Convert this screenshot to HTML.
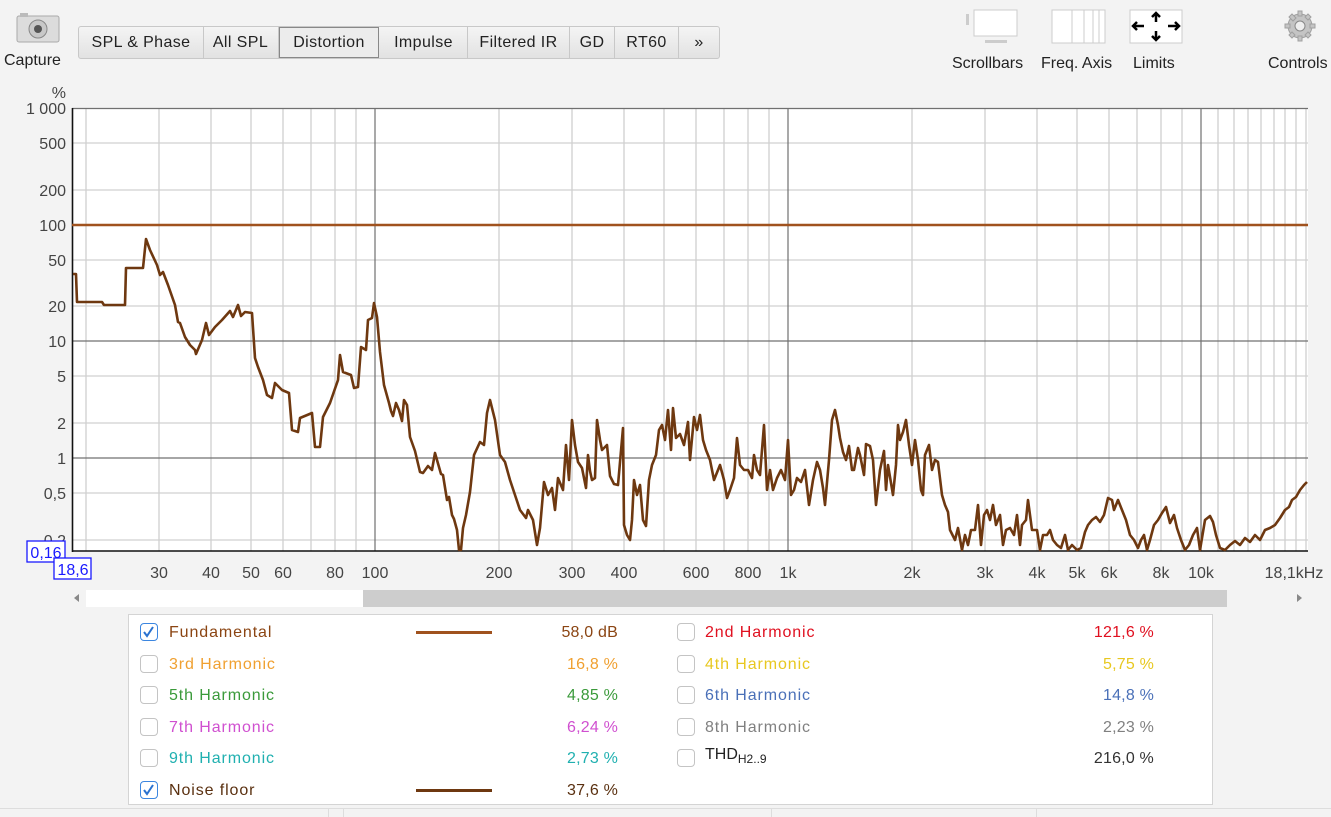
<!DOCTYPE html>
<html><head><meta charset="utf-8"><style>
body{margin:0;width:1331px;height:817px;background:#f3f3f3;font-family:"Liberation Sans",sans-serif;position:relative;overflow:hidden}
.a{position:absolute}
.tabs{left:78px;top:26px;width:642px;height:33px;background:linear-gradient(#f4f4f4,#e2e2e2);border:1px solid #c8c8c8;border-radius:3px;box-sizing:border-box}
.tab{position:absolute;top:0;height:31px;line-height:31px;font-size:16px;color:#222;text-align:center;border-right:1px solid #c8c8c8;letter-spacing:0.4px}
.tl{font-size:16px;color:#222;text-align:center}
.lg{font-size:16px;line-height:20px;letter-spacing:0.9px}
.cb{position:absolute;width:18px;height:18px;border:1.5px solid #c4c4c4;border-radius:4px;background:#fff;box-sizing:border-box}
.cb.on{border-color:#3c86e0}
</style></head><body>
<svg class="a" style="left:15px;top:12px" width="48" height="32"><rect x="2" y="4" width="42" height="26" rx="2" fill="#dcdcdc" stroke="#aaa"/><rect x="5" y="1" width="8" height="4" fill="#bbb"/><circle cx="23" cy="17" r="9" fill="#c8c8c8" stroke="#888"/><circle cx="23" cy="17" r="4" fill="#555"/></svg>
<div class="a tl" style="left:4px;top:52px">Capture</div>
<div class="a tabs">
<div class="tab" style="left:0;width:124px">SPL &amp; Phase</div>
<div class="tab" style="left:124px;width:75px">All SPL</div>
<div class="tab" style="left:200px;width:100px;background:#ececec;border:1px solid #888;height:31px;box-sizing:border-box;line-height:29px">Distortion</div>
<div class="tab" style="left:301px;width:87px">Impulse</div>
<div class="tab" style="left:389px;width:101px">Filtered IR</div>
<div class="tab" style="left:491px;width:44px">GD</div>
<div class="tab" style="left:536px;width:63px">RT60</div>
<div class="tab" style="left:600px;width:40px;border:none">&#187;</div>
</div>
<svg class="a" style="left:965px;top:9px" width="56" height="35"><rect x="1" y="5" width="3" height="11" fill="#ccc"/><rect x="9" y="1" width="43" height="26" fill="#fff" stroke="#ccc"/><rect x="20" y="31" width="22" height="3" fill="#ccc"/></svg>
<div class="a tl" style="left:952px;top:55px">Scrollbars</div>
<svg class="a" style="left:1051px;top:9px" width="56" height="36"><rect x="1" y="1" width="53" height="33" fill="#fff" stroke="#ccc"/><path d="M21 1v33M33 1v33M42 1v33M48 1v33" stroke="#ccc"/></svg>
<div class="a tl" style="left:1041px;top:55px">Freq. Axis</div>
<svg class="a" style="left:1129px;top:9px" width="56" height="36"><rect x="1" y="1" width="52" height="33" fill="#fff" stroke="#ccc"/><g stroke="#000" stroke-width="2.5" fill="none"><path d="M5 17h10M8 13l-4 4 4 4M39 17h11M46 13l4 4-4 4M27 5v8M23 8l4-4 4 4M27 22v9M23 27l4 4 4-4"/></g></svg>
<div class="a tl" style="left:1133px;top:55px">Limits</div>
<svg class="a" style="left:1283px;top:9px" width="34" height="34"><g fill="#c4c4c4" stroke="#a0a0a0"><circle cx="17" cy="17" r="12"/><path d="M15 2h4v5h-4zM15 27h4v5h-4zM2 15h5v4H2zM27 15h5v4h-5z"/><path d="M6 8l3-3 4 4-3 3zM25 29l-3-3 3-3 3 3zM25 5l3 3-3 3-3-3zM6 26l3-3 3 3-3 3z"/></g><circle cx="17" cy="17" r="5" fill="#eee" stroke="#888"/></svg>
<div class="a tl" style="left:1268px;top:55px">Controls</div>

<svg class="a" style="left:0;top:80px" width="1331" height="530" font-family="Liberation Sans" font-size="16" fill="#444">
<g transform="translate(0,-80)">
<rect x="72" y="108" width="1236" height="443" fill="#fff"/>
<g stroke="#d0d0d0" stroke-width="1.3">
<path d="M86 108V551M159 108V551M211 108V551M251 108V551M283 108V551M311 108V551M335 108V551M356 108V551M499 108V551M572 108V551M624 108V551M664 108V551M696 108V551M724 108V551M748 108V551M769 108V551M912 108V551M985 108V551M1037 108V551M1077 108V551M1109 108V551M1137 108V551M1161 108V551M1182 108V551M1218 108V551M1234 108V551M1248 108V551M1261 108V551M1274 108V551M1285 108V551M1296 108V551M1306 108V551"/>
<path d="M72 143H1308M72 190H1308M72 260H1308M72 306H1308M72 376H1308M72 423H1308M72 493H1308M72 540H1308"/>
</g>
<g stroke="#707070" stroke-width="1.2"><path d="M375 108V551M788 108V551M1201 108V551M72 341H1308M72 458H1308M72 108.5H1308"/></g>
<path d="M72.5 108V552M72 551H1308" stroke="#111" stroke-width="1.6"/>
<path d="M72 225H1308" stroke="#a0521e" stroke-width="2.5"/>
<polyline fill="none" stroke="#6e3810" stroke-width="2.6" stroke-linejoin="round" points="73,274 76,274 77,302 102,302 104,305 125,305 126,268 143,268 146,239 150,250 157,265 160,275 163,272 168,285 175,305 178,322 180,323 185,337 190,345 195,350 196,354 202,340 206,323 209,335 215,327 222,320 230,311 233,317 238,305 241,316 245,312 252,313 255,358 258,367 263,380 267,395 272,398 275,383 282,390 289,393 292,430 298,432 300,418 312,413 315,447 320,447 323,417 330,403 338,380 340,355 343,372 351,375 354,388 358,387 361,347 366,350 368,320 372,318 374,303 377,317 380,352 384,385 389,403 391,411 393,416 396,403 399,410 402,421 404,400 407,405 410,437 415,451 420,472 423,473 428,466 432,470 435,453 441,474 443,475 447,500 449,497 452,515 454,519 457,530 459,550 461,550 463,528 466,515 470,492 474,455 480,442 484,445 487,413 490,400 495,420 500,455 505,462 510,480 515,495 520,510 526,518 528,510 533,520 537,545 540,528 544,482 548,495 552,488 555,510 558,478 563,490 566,445 569,480 572,420 575,445 578,462 582,468 586,488 588,455 590,471 592,480 595,478 597,420 600,440 602,450 607,445 610,476 614,484 618,485 623,428 624,525 627,535 630,540 632,520 634,480 637,495 640,485 643,520 646,526 649,480 652,465 656,455 659,430 662,425 665,440 668,410 671,450 673,408 676,438 680,434 684,445 688,422 690,460 694,417 697,430 700,415 703,440 706,450 710,460 714,480 720,465 724,480 727,498 730,490 734,478 737,438 740,465 744,470 748,470 752,478 754,455 757,470 760,475 764,425 767,490 770,470 773,490 777,478 781,470 785,480 788,440 791,495 794,490 797,478 801,482 805,470 809,505 813,480 817,462 820,470 823,488 825,505 829,460 832,420 835,410 838,425 840,438 843,452 846,460 849,446 852,470 854,470 858,448 860,455 864,475 866,444 870,446 873,460 876,505 880,470 884,451 886,490 888,465 893,495 896,465 898,425 900,440 903,432 906,420 909,445 912,465 915,440 918,460 921,490 923,495 925,455 929,445 932,470 935,460 938,462 942,495 945,505 948,512 950,530 955,540 958,528 962,550 965,535 968,545 971,530 975,530 978,505 981,545 984,515 987,510 990,520 993,505 996,525 1000,515 1003,545 1006,530 1010,528 1014,535 1017,515 1020,545 1022,525 1026,520 1028,500 1032,530 1037,530 1040,550 1043,535 1047,535 1050,530 1053,540 1057,545 1061,548 1065,535 1068,550 1072,545 1077,550 1081,548 1085,532 1088,525 1092,520 1096,517 1100,522 1104,515 1108,498 1112,500 1114,510 1118,500 1122,510 1126,520 1130,535 1134,540 1138,548 1141,540 1144,535 1147,550 1150,540 1154,525 1158,520 1162,513 1166,507 1170,523 1174,515 1177,528 1181,540 1185,550 1189,545 1193,535 1197,528 1200,550 1205,520 1210,516 1213,522 1216,535 1220,548 1225,550 1230,545 1235,541 1240,545 1245,538 1250,542 1255,535 1260,540 1265,530 1270,528 1275,525 1280,518 1285,510 1289,507 1292,500 1296,497 1300,490 1304,485 1307,482"/>
<g text-anchor="end">
<text x="66" y="98">%</text>
<text x="66" y="114">1 000</text><text x="66" y="149">500</text><text x="66" y="196">200</text><text x="66" y="231">100</text><text x="66" y="266">50</text><text x="66" y="312">20</text><text x="66" y="347">10</text><text x="66" y="382">5</text><text x="66" y="429">2</text><text x="66" y="464">1</text><text x="66" y="499">0,5</text><text x="66" y="546">0,2</text>
</g>
<g text-anchor="middle">
<text x="159" y="578">30</text><text x="211" y="578">40</text><text x="251" y="578">50</text><text x="283" y="578">60</text><text x="335" y="578">80</text><text x="375" y="578">100</text><text x="499" y="578">200</text><text x="572" y="578">300</text><text x="624" y="578">400</text><text x="696" y="578">600</text><text x="748" y="578">800</text><text x="788" y="578">1k</text><text x="912" y="578">2k</text><text x="985" y="578">3k</text><text x="1037" y="578">4k</text><text x="1077" y="578">5k</text><text x="1109" y="578">6k</text><text x="1161" y="578">8k</text><text x="1201" y="578">10k</text><text x="1294" y="578">18,1kHz</text>
</g>
<rect x="27" y="541" width="38" height="21" fill="#fff" stroke="#1a1aff" stroke-width="1.3"/><text x="46" y="558" text-anchor="middle" fill="#1a1aff">0,16</text>
<rect x="54" y="558" width="37" height="21" fill="#fff" stroke="#1a1aff" stroke-width="1.3"/><text x="73" y="575" text-anchor="middle" fill="#1a1aff">18,6</text>
<rect x="86" y="590" width="1141" height="17" fill="#fff"/>
<rect x="363" y="590" width="864" height="17" fill="#cdcdcd"/>
<path d="M79 594l-5 4 5 4z" fill="#888"/><path d="M1297 594l5 4-5 4z" fill="#888"/>
</g></svg>

<div class="a" style="left:128px;top:614px;width:1085px;height:191px;background:#fff;border:1px solid #d4d4d4;box-sizing:border-box"></div>
<div class="a" style="left:0;top:808px;width:1331px;height:1px;background:#ddd"></div>
<div class="a" style="left:328px;top:809px;width:1px;height:8px;background:#ddd"></div>
<div class="a" style="left:343px;top:809px;width:1px;height:8px;background:#ddd"></div>
<div class="a" style="left:771px;top:809px;width:1px;height:8px;background:#ddd"></div>
<div class="a" style="left:1036px;top:809px;width:1px;height:8px;background:#ddd"></div>

<div class="cb on" style="left:140px;top:623px"><svg width="15" height="15" style="position:absolute;left:0;top:0"><path d="M3 8l3 4 6-9" stroke="#2a72d0" stroke-width="2" fill="none"/></svg></div>
<div class="cb" style="left:140px;top:655px"></div>
<div class="cb" style="left:140px;top:686px"></div>
<div class="cb" style="left:140px;top:718px"></div>
<div class="cb" style="left:140px;top:749px"></div>
<div class="cb on" style="left:140px;top:781px"><svg width="15" height="15" style="position:absolute;left:0;top:0"><path d="M3 8l3 4 6-9" stroke="#2a72d0" stroke-width="2" fill="none"/></svg></div>
<div class="cb" style="left:677px;top:623px"></div>
<div class="cb" style="left:677px;top:655px"></div>
<div class="cb" style="left:677px;top:686px"></div>
<div class="cb" style="left:677px;top:718px"></div>
<div class="cb" style="left:677px;top:749px"></div>

<div class="a lg" style="left:169px;top:623px;color:#8b4513">Fundamental</div>
<div class="a lg" style="left:169px;top:655px;color:#f0a030">3rd Harmonic</div>
<div class="a lg" style="left:169px;top:686px;color:#3a9a3a">5th Harmonic</div>
<div class="a lg" style="left:169px;top:718px;color:#d050d0">7th Harmonic</div>
<div class="a lg" style="left:169px;top:749px;color:#20b0b0">9th Harmonic</div>
<div class="a lg" style="left:169px;top:781px;color:#5a3010">Noise floor</div>
<div class="a" style="left:416px;top:631px;width:76px;height:3px;background:#a0521e"></div>
<div class="a" style="left:416px;top:789px;width:76px;height:3px;background:#6e3810"></div>
<div class="a lg" style="left:500px;width:118px;text-align:right;top:623px;color:#8b4513;letter-spacing:0.2px">58,0 dB</div>
<div class="a lg" style="left:500px;width:118px;text-align:right;top:655px;color:#f0a030;letter-spacing:0.2px">16,8 %</div>
<div class="a lg" style="left:500px;width:118px;text-align:right;top:686px;color:#3a9a3a;letter-spacing:0.2px">4,85 %</div>
<div class="a lg" style="left:500px;width:118px;text-align:right;top:718px;color:#d050d0;letter-spacing:0.2px">6,24 %</div>
<div class="a lg" style="left:500px;width:118px;text-align:right;top:749px;color:#20b0b0;letter-spacing:0.2px">2,73 %</div>
<div class="a lg" style="left:500px;width:118px;text-align:right;top:781px;color:#5a3010;letter-spacing:0.2px">37,6 %</div>

<div class="a lg" style="left:705px;top:623px;color:#e01020">2nd Harmonic</div>
<div class="a lg" style="left:705px;top:655px;color:#e8c820">4th Harmonic</div>
<div class="a lg" style="left:705px;top:686px;color:#4a70b8">6th Harmonic</div>
<div class="a lg" style="left:705px;top:718px;color:#808080">8th Harmonic</div>
<div class="a lg" style="left:705px;top:745px;color:#222;letter-spacing:0">THD<sub style="font-size:12px">H2..9</sub></div>
<div class="a lg" style="left:1000px;width:154px;text-align:right;top:623px;color:#e01020;letter-spacing:0.2px">121,6 %</div>
<div class="a lg" style="left:1000px;width:154px;text-align:right;top:655px;color:#e8c820;letter-spacing:0.2px">5,75 %</div>
<div class="a lg" style="left:1000px;width:154px;text-align:right;top:686px;color:#4a70b8;letter-spacing:0.2px">14,8 %</div>
<div class="a lg" style="left:1000px;width:154px;text-align:right;top:718px;color:#808080;letter-spacing:0.2px">2,23 %</div>
<div class="a lg" style="left:1000px;width:154px;text-align:right;top:749px;color:#333;letter-spacing:0.2px">216,0 %</div>
</body></html>
